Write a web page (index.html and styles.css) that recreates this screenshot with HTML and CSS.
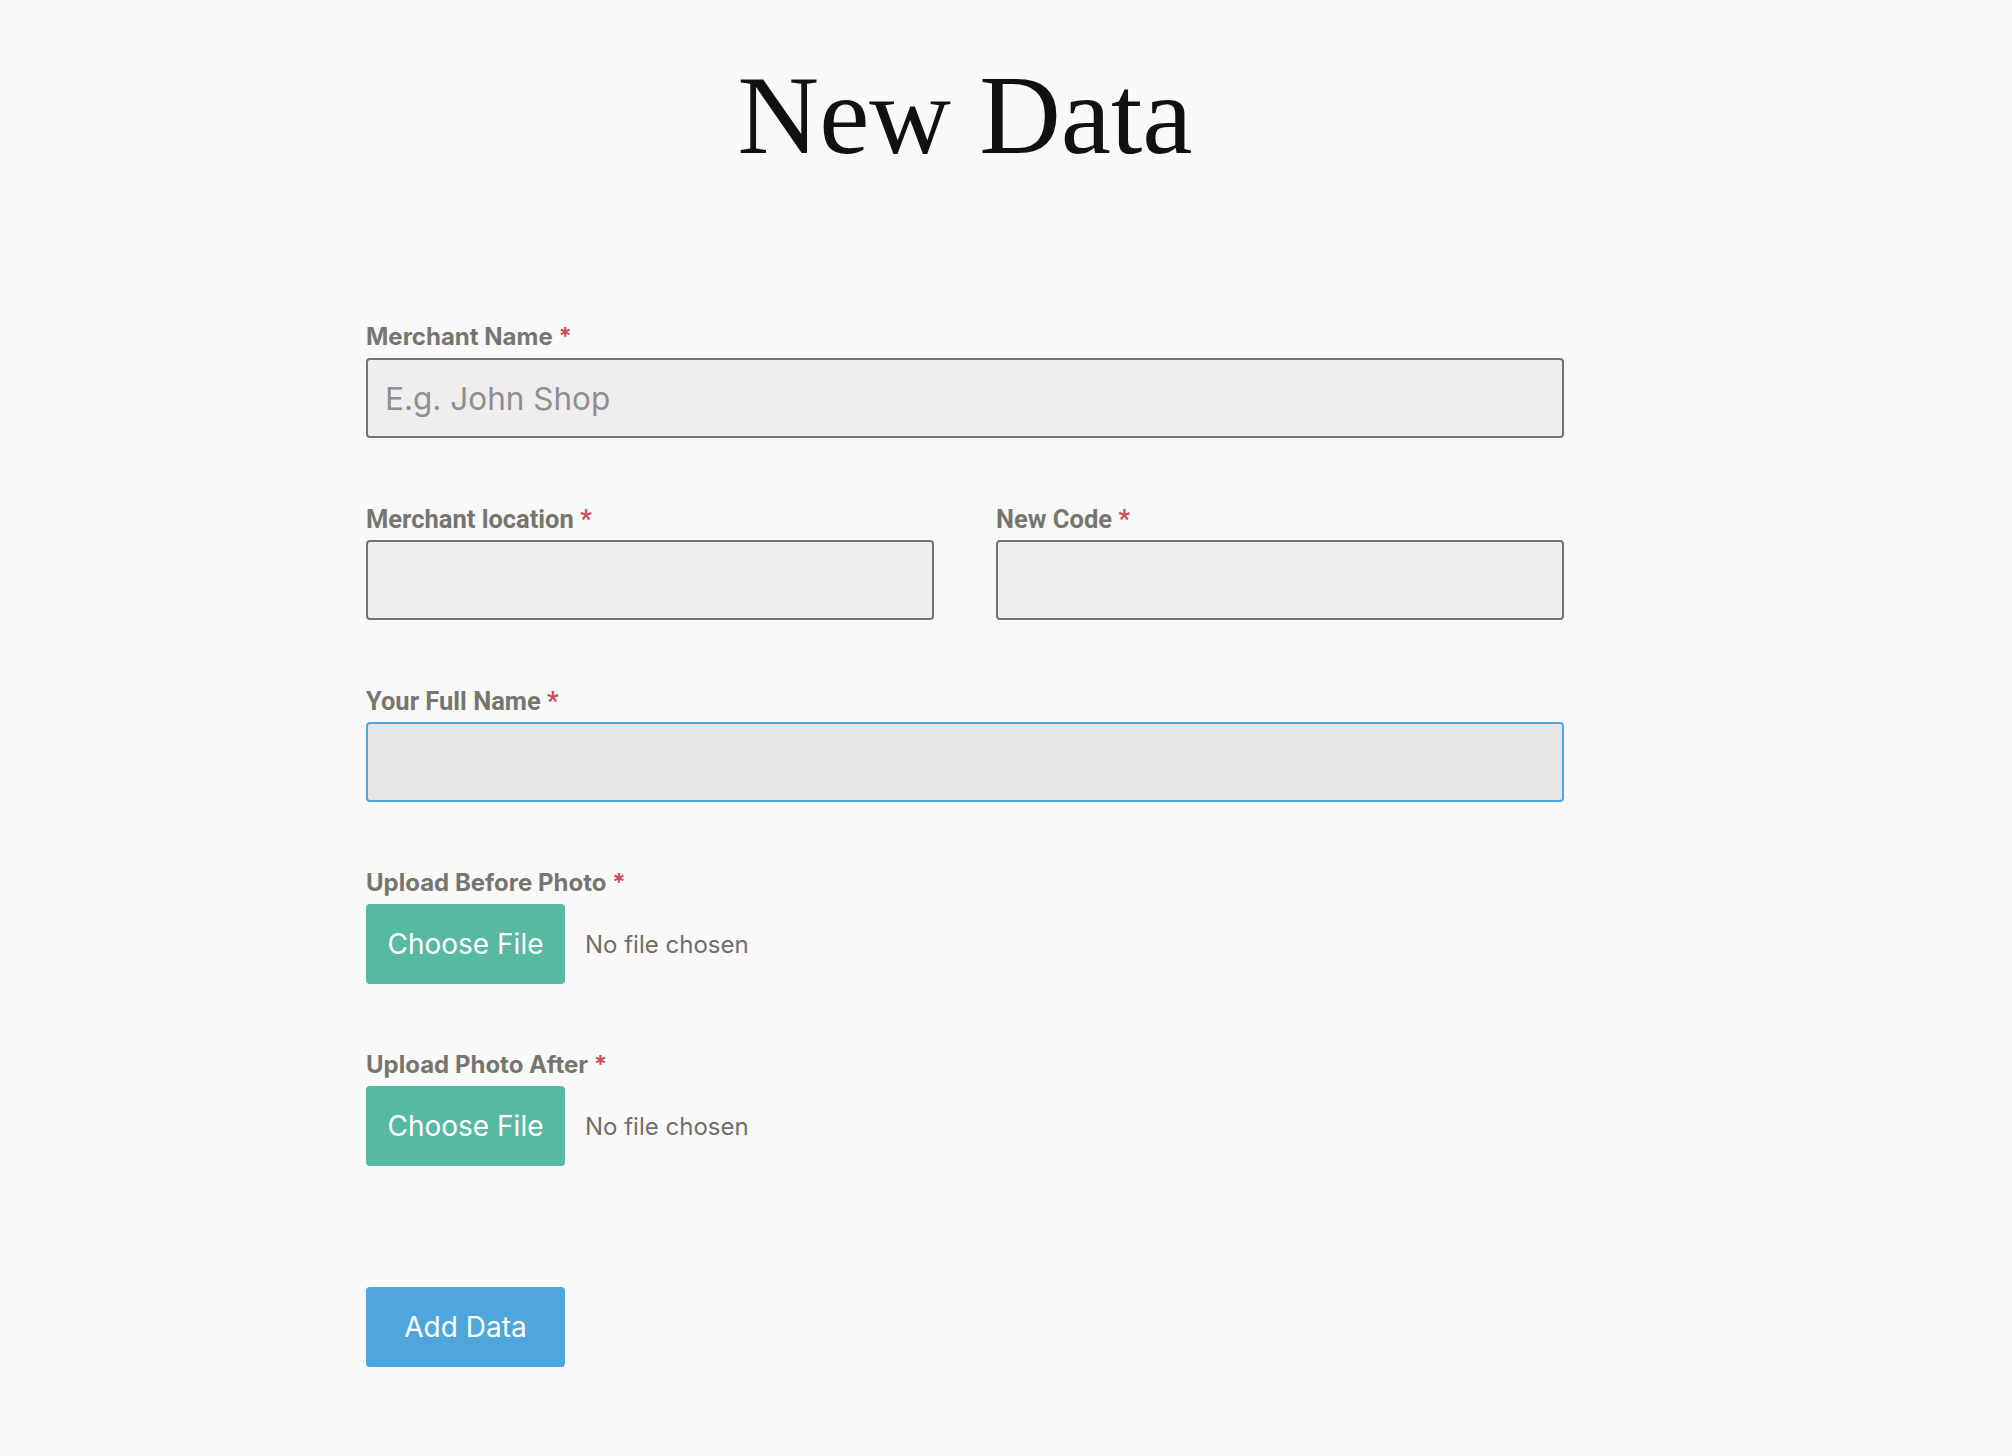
FILE: index.html
```html
<!DOCTYPE html>
<html lang="en">
<head>
<meta charset="utf-8">
<title>New Data</title>
<link rel="stylesheet" href="styles.css">
</head>
<body>
<div class="page">
  <h1 class="title">New Data</h1>
  <form class="form">
    <div class="group">
      <label class="label inter">Merchant Name <span class="req">*</span></label>
      <input class="field" type="text" placeholder="E.g. John Shop">
    </div>
    <div class="group row">
      <div class="col">
        <label class="label roboto">Merchant location <span class="req">*</span></label>
        <input class="field" type="text">
      </div>
      <div class="col">
        <label class="label roboto">New Code <span class="req">*</span></label>
        <input class="field" type="text">
      </div>
    </div>
    <div class="group">
      <label class="label roboto">Your Full Name <span class="req">*</span></label>
      <input class="field focused" type="text">
    </div>
    <div class="group">
      <label class="label inter">Upload Before Photo <span class="req">*</span></label>
      <div class="file">
        <span class="file-btn">Choose File</span>
        <span class="file-text">No file chosen</span>
      </div>
    </div>
    <div class="group last">
      <label class="label inter">Upload Photo After <span class="req">*</span></label>
      <div class="file">
        <span class="file-btn">Choose File</span>
        <span class="file-text">No file chosen</span>
      </div>
    </div>
    <button class="submit" type="button">Add Data</button>
  </form>
</div>
</body>
</html>
```

FILE: styles.css
```css
html, body {
  margin: 0;
  padding: 0;
  background: #f9f9f9;
}
body {
  font-family: "Inter", "Noto Sans", sans-serif;
}
.page {
  width: 1930px;
  padding-top: 47px;
}
.title {
  margin: 0;
  text-align: center;
  font-family: "Liberation Serif", "DejaVu Serif", serif;
  font-weight: 400;
  font-size: 113px;
  line-height: 136px;
  color: #111111;
}
.form {
  width: 1198px;
  margin: 141px auto 0;
}
.group {
  margin-bottom: 68px;
}
.group.last {
  margin-bottom: 121px;
}
.row {
  display: flex;
  gap: 62px;
}
.col {
  flex: 1;
}
.label {
  display: block;
  font-weight: 700;
  color: #76766f;
  line-height: 26px;
  margin-bottom: 8px;
}
.label.inter {
  font-family: "Inter", sans-serif;
  font-size: 24px;
}
.label.roboto {
  font-family: "Roboto", sans-serif;
  font-size: 25.5px;
}
.req {
  color: #d24a60;
}
.field {
  display: block;
  box-sizing: border-box;
  width: 100%;
  height: 80px;
  margin: 0;
  padding: 0 17px;
  background: #eeeeee;
  border: 2px solid #74746d;
  border-radius: 4px;
  font-family: "Inter", sans-serif;
  font-size: 31.5px;
  color: #333;
  outline: none;
}
.field::placeholder {
  color: #8f8f8f;
}
.field.focused {
  background: #e6e6e6;
  border-color: #4ea7de;
}
.file {
  display: flex;
  align-items: center;
  gap: 20px;
}
.file-btn {
  display: flex;
  align-items: center;
  justify-content: center;
  width: 199px;
  height: 80px;
  background: #58b9a2;
  color: #ffffff;
  border-radius: 4px;
  font-size: 28px;
}
.file-text {
  font-size: 24px;
  color: #6f6f6a;
}
.submit {
  display: block;
  width: 199px;
  height: 80px;
  padding: 0;
  border: none;
  border-radius: 4px;
  background: #4ea6dd;
  color: #ffffff;
  font-family: "Inter", sans-serif;
  font-size: 28px;
}
```
